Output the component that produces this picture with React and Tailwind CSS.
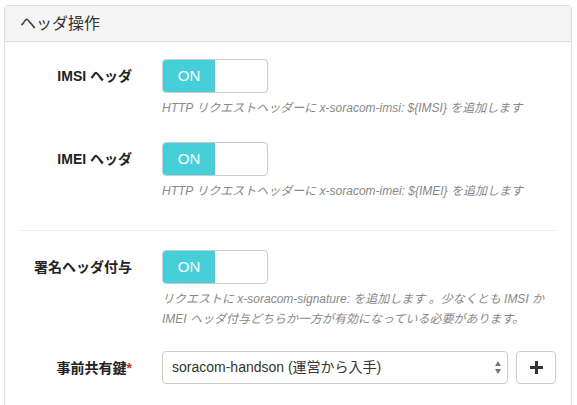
import React from 'react';

const font = { fontFamily: '"Liberation Sans", "Noto Sans CJK JP", sans-serif' };

function Toggle() {
  return (
    <div className="flex h-[34px] w-[106px] overflow-hidden rounded-[4px] border border-[#cccccc] bg-white">
      <span className="flex w-[52px] items-center justify-center bg-[#47cfd9] text-[15px] font-medium text-white">
        ON
      </span>
      <span className="flex-1" />
    </div>
  );
}

function Row({ label, required, children }) {
  return (
    <div className="flex items-start">
      <div className="flex h-[34px] w-[112px] shrink-0 items-center justify-end text-[14px] font-bold text-[#222]">
        {label}
        {required && <span className="text-[#c9302c]">*</span>}
      </div>
      <div className="ml-[30px] flex-1">{children}</div>
    </div>
  );
}

function Help({ children }) {
  return <p className="mt-[5px] text-[12px] leading-[20px] italic text-[#888]">{children}</p>;
}

export default function App() {
  return (
    <div className="min-h-screen bg-white pl-[4px] pt-[5px]" style={font}>
      <div className="h-[420px] w-[568px] rounded-t-[4px] border border-[#dddddd]">
        <div className="flex h-[36px] items-center border-b border-[#dddddd] bg-[#f5f5f5] px-[15px] text-[16px] text-[#333]">
          ヘッダ操作
        </div>
        <div className="px-[15px] pt-[17px]">
          <Row label="IMSI ヘッダ">
            <Toggle />
            <Help>HTTP リクエストヘッダーに x-soracom-imsi: ${'{IMSI}'} を追加します</Help>
          </Row>
          <div className="mt-[24px]">
            <Row label="IMEI ヘッダ">
              <Toggle />
              <Help>HTTP リクエストヘッダーに x-soracom-imei: ${'{IMEI}'} を追加します</Help>
            </Row>
          </div>
          <hr className="mt-[29px] mb-[19px] border-t border-[#eeeeee]" />
          <Row label="署名ヘッダ付与">
            <Toggle />
            <Help>
              リクエストに x-soracom-signature: を追加します 。少なくとも IMSI か
              <br />
              IMEI ヘッダ付与どちらか一方が有効になっている必要があります。
            </Help>
          </Row>
          <div className="mt-[22px]">
            <Row label="事前共有鍵" required>
              <div className="flex gap-[8px]">
                <div className="flex h-[33px] flex-1 items-center justify-between rounded-[4px] border border-[#cccccc] bg-white pl-[9px] pr-[6px] text-[14px] text-[#333]">
                  <span>soracom-handson (運営から入手)</span>
                  <svg width="6" height="13" viewBox="0 0 6 13">
                    <path d="M3 0 L6 5 L0 5 Z" fill="#777" />
                    <path d="M0 8 L6 8 L3 13 Z" fill="#777" />
                  </svg>
                </div>
                <div className="flex h-[33px] w-[40px] items-center justify-center rounded-[4px] border border-[#cccccc] bg-white">
                  <svg width="13" height="13" viewBox="0 0 13 13">
                    <path d="M5 0 H8 V5 H13 V8 H8 V13 H5 V8 H0 V5 H5 Z" fill="#333" />
                  </svg>
                </div>
              </div>
            </Row>
          </div>
        </div>
      </div>
    </div>
  );
}
